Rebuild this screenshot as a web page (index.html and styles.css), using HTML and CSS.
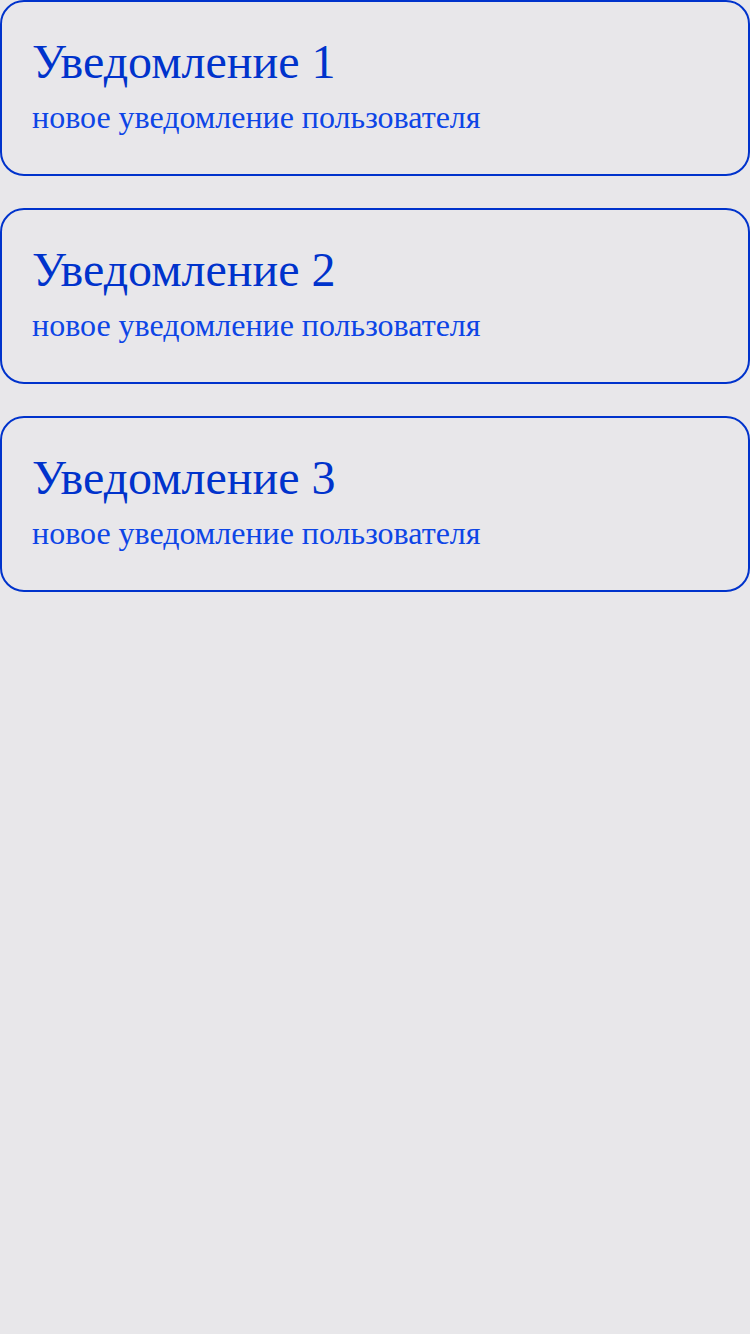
FILE: index.html
```html
<!DOCTYPE html>
<html lang="ru">
<head>
<meta charset="utf-8">
<link rel="stylesheet" href="styles.css">
</head>
<body>
<div class="list">
  <div class="card">
    <div class="title">Уведомление 1</div>
    <div class="text">новое уведомление пользователя</div>
  </div>
  <div class="card">
    <div class="title">Уведомление 2</div>
    <div class="text">новое уведомление пользователя</div>
  </div>
  <div class="card">
    <div class="title">Уведомление 3</div>
    <div class="text">новое уведомление пользователя</div>
  </div>
</div>
</body>
</html>
```
FILE: styles.css
```css
html, body {
  margin: 0;
  padding: 0;
  background: #e8e7ea;
  font-family: "Liberation Serif", "Times New Roman", serif;
}
.list {
  display: flex;
  flex-direction: column;
  gap: 32px;
}
.card {
  box-sizing: border-box;
  height: 176px;
  border: 2px solid #0033cc;
  border-radius: 24px;
  padding: 32px 30px 0;
}
.title {
  font-size: 48px;
  line-height: 55px;
  color: #0033cc;
}
.text {
  margin-top: 10px;
  font-size: 32px;
  line-height: 37px;
  color: #0d45e6;
}
```
